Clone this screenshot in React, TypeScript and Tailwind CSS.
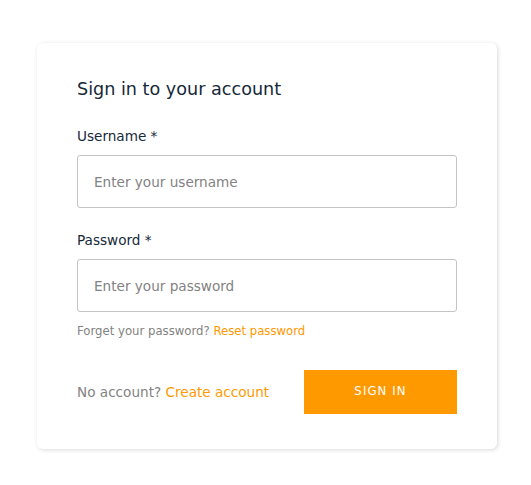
export default function App() {
  return (
    <div className="min-h-screen w-full bg-white pt-[43px] pl-[37px]" style={{ fontFamily: '"DejaVu Sans", Verdana, sans-serif' }}>
      <div className="w-[460px] rounded-md bg-white px-10 pt-[35px] pb-[35px] shadow-[1px_1px_4px_0_rgba(0,0,0,0.15)]">
        <div className="mb-[28px] text-[17.6px] leading-[22px] text-[#152939]">Sign in to your account</div>

        <form className="flex flex-col">
          <label className="mb-[10px] text-[13.6px] leading-[17px] text-[#152939]">Username *</label>
          <input
            placeholder="Enter your username"
            className="h-[53px] w-[380px] rounded-[3px] border border-[#c4c4c4] bg-white px-4 text-[13.6px] text-[#152939] placeholder-[#828282] outline-none"
          />

          <label className="mt-[24px] mb-[10px] text-[13.6px] leading-[17px] text-[#152939]">Password *</label>
          <input
            type="password"
            placeholder="Enter your password"
            className="h-[53px] w-[380px] rounded-[3px] border border-[#c4c4c4] bg-white px-4 text-[13.6px] text-[#152939] placeholder-[#828282] outline-none"
          />

          <div className="mt-[12px] text-[11.7px] leading-[15px] text-[#828282]">
            Forget your password? <a className="text-[#ff9900]">Reset password</a>
          </div>

          <div className="mt-[31px] flex w-[380px] items-center justify-between">
            <span className="text-[13.6px] text-[#828282]">
              No account? <a className="text-[#ff9900]">Create account</a>
            </span>
            <button
              type="button"
              className="h-[44px] w-[153px] bg-[#ff9900] text-[11.7px] tracking-[1.1px] text-white"
            >
              SIGN IN
            </button>
          </div>
        </form>
      </div>
    </div>
  );
}
